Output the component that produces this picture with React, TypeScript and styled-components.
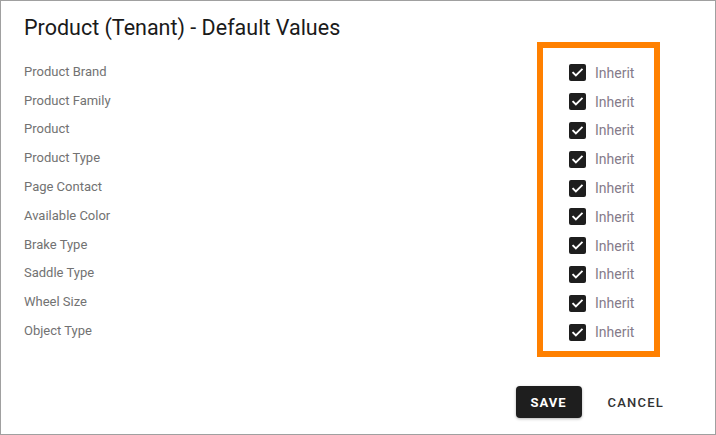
import React from "react";
import styled, { createGlobalStyle } from "styled-components";

const Global = createGlobalStyle`
  html, body { margin: 0; padding: 0; background: #fff; }
  * { box-sizing: border-box; }
`;

const Dialog = styled.div`
  width: 716px;
  height: 435px;
  border: 1px solid #a0a0a0;
  background: #fff;
  font-family: Roboto, "Liberation Sans", sans-serif;
  padding: 15px 0 0 23px;
  display: flex;
  flex-direction: column;
`;

const Title = styled.h1`
  margin: 0;
  font-size: 21.5px;
  line-height: 24px;
  font-weight: 400;
  color: #1a1a1a;
`;

const Body = styled.div`
  display: flex;
  align-items: flex-start;
  margin-top: 2px;
`;

const Labels = styled.div`
  flex: 1;
  padding-top: 15px;
  display: flex;
  flex-direction: column;
`;

const Label = styled.div`
  height: 28.8px;
  display: flex;
  align-items: center;
  font-size: 13px;
  color: #727272;
`;

const Highlight = styled.div`
  width: 123px;
  height: 315px;
  margin-right: 55px;
  border: 6px solid #ff8000;
  padding: 10.5px 0 0 26px;
  display: flex;
  flex-direction: column;
`;

const CheckRow = styled.label`
  height: 28.8px;
  display: flex;
  align-items: center;
  gap: 9px;
  font-size: 14px;
  color: #857b8a;
`;

const Box = styled.span`
  width: 17px;
  height: 17px;
  border-radius: 2px;
  background: #1e1e1e;
  display: flex;
  align-items: center;
  justify-content: center;
`;

const Footer = styled.div`
  display: flex;
  justify-content: flex-end;
  align-items: center;
  gap: 10px;
  margin-top: 29px;
  padding-right: 35px;
`;

const SaveButton = styled.button`
  width: 66px;
  height: 32px;
  border: none;
  border-radius: 4px;
  background: #1e1e1e;
  color: #fff;
  font-family: Roboto, "Liberation Sans", sans-serif;
  font-size: 13px;
  font-weight: 700;
  letter-spacing: 1px;
  padding: 0;
  box-shadow: 0 1px 3px rgba(0, 0, 0, 0.3);
`;

const CancelButton = styled.button`
  height: 32px;
  border: none;
  background: transparent;
  color: #333;
  font-family: Roboto, "Liberation Sans", sans-serif;
  font-size: 13px;
  font-weight: 500;
  letter-spacing: 1.2px;
  padding: 0 16px;
`;

const fields = [
  "Product Brand",
  "Product Family",
  "Product",
  "Product Type",
  "Page Contact",
  "Available Color",
  "Brake Type",
  "Saddle Type",
  "Wheel Size",
  "Object Type",
];

const Check = () => (
  <Box>
    <svg width="13" height="13" viewBox="0 0 24 24">
      <path
        d="M4 12.5l5 5L20 6.5"
        fill="none"
        stroke="#fff"
        strokeWidth="3.4"
        strokeLinecap="square"
      />
    </svg>
  </Box>
);

export default function App() {
  return (
    <>
      <Global />
      <Dialog>
        <Title>Product (Tenant) - Default Values</Title>
        <Body>
          <Labels>
            {fields.map((f) => (
              <Label key={f}>{f}</Label>
            ))}
          </Labels>
          <Highlight>
            {fields.map((f) => (
              <CheckRow key={f}>
                <Check />
                Inherit
              </CheckRow>
            ))}
          </Highlight>
        </Body>
        <Footer>
          <SaveButton>SAVE</SaveButton>
          <CancelButton>CANCEL</CancelButton>
        </Footer>
      </Dialog>
    </>
  );
}
